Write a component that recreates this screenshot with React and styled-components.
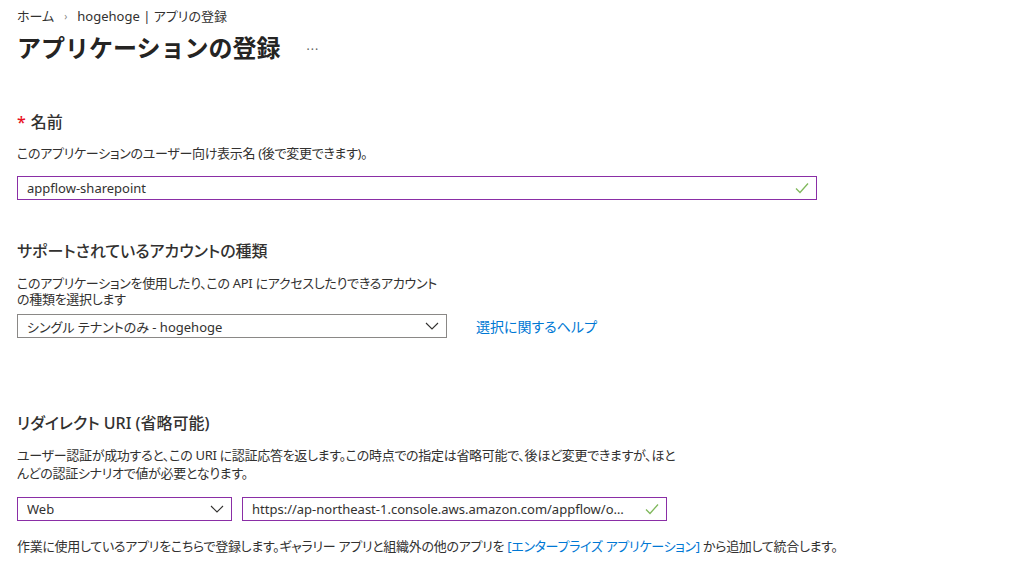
import React from "react";
import styled, { createGlobalStyle } from "styled-components";

const Global = createGlobalStyle`
  html, body { margin: 0; padding: 0; background: #fff; }
  body {
    font-family: "Noto Sans", "Noto Sans CJK JP", sans-serif;
    color: #323130;
  }
  * { box-sizing: border-box; }
`;

const Page = styled.div`
  width: 1024px;
  height: 583px;
  padding: 6px 0 0 17px;
  overflow: hidden;
`;

const Breadcrumb = styled.nav`
  display: flex;
  align-items: center;
  gap: 10px;
  font-size: 13px;
  line-height: 20px;
  color: #323130;
  font-feature-settings: "palt";
`;

const Sep = styled.span`
  font-size: 10px;
  color: #8a8886;
`;

const TitleRow = styled.div`
  display: flex;
  align-items: center;
  margin-top: 6px;
  height: 32px;
`;

const Title = styled.h1`
  margin: 0;
  font-size: 24px;
  line-height: 32px;
  font-weight: 700;
  color: #252423;
`;

const More = styled.span`
  margin-left: 26px;
  font-size: 12px;
  color: #605e5c;
  letter-spacing: 1px;
  position: relative;
  top: 1px;
`;

const Heading = styled.h2`
  margin: ${(p) => p.$mt}px 0 0 0;
  font-size: 16px;
  line-height: 22px;
  font-weight: 500;
  color: #323130;
  font-feature-settings: "palt";
`;

const Star = styled.span`
  color: #e81123;
  margin-right: 5px;
`;

const Desc = styled.p`
  margin: ${(p) => p.$mt}px 0 0 0;
  font-size: 13px;
  line-height: ${(p) => p.$lh || 18}px;
  letter-spacing: -0.3px;
  color: #323130;
  font-feature-settings: "palt";
`;

const FieldBox = styled.div`
  margin-top: ${(p) => p.$mt || 0}px;
  width: ${(p) => p.$w}px;
  height: 24px;
  border: 1px solid ${(p) => (p.$active ? "#8a2ea6" : "#8a8886")};
  display: flex;
  align-items: center;
  gap: 6px;
  padding: 0 7px 0 9px;
  font-size: 13px;
  color: #323130;
  background: #fff;
  font-feature-settings: "palt";
`;

const FieldText = styled.span`
  flex: 1;
  min-width: 0;
  white-space: nowrap;
  overflow: hidden;
  text-overflow: ellipsis;
`;

const Row = styled.div`
  display: flex;
  align-items: center;
  gap: ${(p) => p.$gap}px;
  margin-top: ${(p) => p.$mt}px;
`;

const Link = styled.a`
  color: #0078d4;
  text-decoration: none;
  font-size: 14px;
  font-feature-settings: "palt";
`;

const InlineLink = styled.a`
  color: #0078d4;
  text-decoration: none;
`;

const Check = () => (
  <svg width="14" height="12" viewBox="0 0 14 12" style={{ flexShrink: 0 }}>
    <path d="M1 6.5 L5 10.5 L13 1.5" fill="none" stroke="#7fb85b" strokeWidth="1.3" />
  </svg>
);

const Chevron = () => (
  <svg width="14" height="8" viewBox="0 0 14 8" style={{ flexShrink: 0 }}>
    <path d="M1 1 L7 7 L13 1" fill="none" stroke="#323130" strokeWidth="1.1" />
  </svg>
);

export default function App() {
  return (
    <>
      <Global />
      <Page>
        <Breadcrumb>
          <span>ホーム</span>
          <Sep>›</Sep>
          <span>hogehoge | アプリの登録</span>
        </Breadcrumb>
        <TitleRow>
          <Title>アプリケーションの登録</Title>
          <More>···</More>
        </TitleRow>

        <Heading $mt={47}>
          <Star>*</Star>名前
        </Heading>
        <Desc $mt={11}>このアプリケーションのユーザー向け表示名 (後で変更できます)。</Desc>
        <FieldBox $mt={14} $w={800} $active>
          <FieldText>appflow-sharepoint</FieldText>
          <Check />
        </FieldBox>

        <Heading $mt={40}>サポートされているアカウントの種類</Heading>
        <Desc $mt={13} $lh={16}>
          このアプリケーションを使用したり、この API にアクセスしたりできるアカウント
          <br />
          の種類を選択します
        </Desc>
        <Row $mt={7} $gap={29}>
          <FieldBox $w={430}>
            <FieldText>シングル テナントのみ - hogehoge</FieldText>
            <Chevron />
          </FieldBox>
          <Link href="#">選択に関するヘルプ</Link>
        </Row>

        <Heading $mt={74}>リダイレクト URI (省略可能)</Heading>
        <Desc $mt={12}>
          ユーザー認証が成功すると、この URI に認証応答を返します。この時点での指定は省略可能で、後ほど変更できますが、ほと
          <br />
          んどの認証シナリオで値が必要となります。
        </Desc>
        <Row $mt={15} $gap={10}>
          <FieldBox $w={215} $active>
            <FieldText>Web</FieldText>
            <Chevron />
          </FieldBox>
          <FieldBox $w={425} $active>
            <FieldText>https://ap-northeast-1.console.aws.amazon.com/appflow/o…</FieldText>
            <Check />
          </FieldBox>
        </Row>
        <Desc $mt={16}>
          作業に使用しているアプリをこちらで登録します。ギャラリー アプリと組織外の他のアプリを{" "}
          <InlineLink href="#">[エンタープライズ アプリケーション]</InlineLink> から追加して統合します。
        </Desc>
      </Page>
    </>
  );
}
